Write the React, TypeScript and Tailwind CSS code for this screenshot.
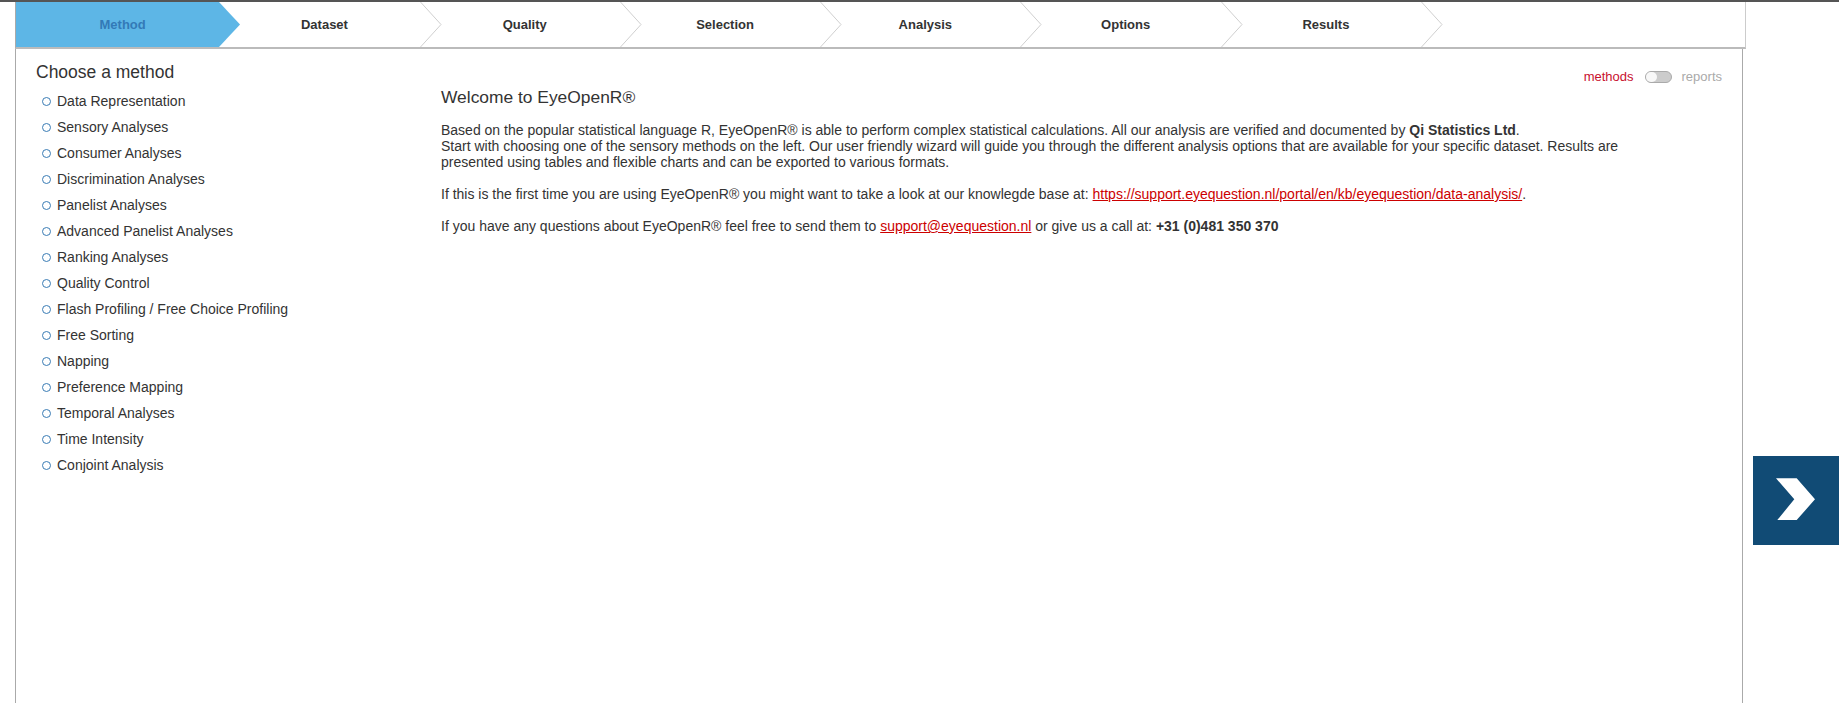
import React from 'react'

const steps = ['Method', 'Dataset', 'Quality', 'Selection', 'Analysis', 'Options', 'Results']

const methods = [
    'Data Representation',
    'Sensory Analyses',
    'Consumer Analyses',
    'Discrimination Analyses',
    'Panelist Analyses',
    'Advanced Panelist Analyses',
    'Ranking Analyses',
    'Quality Control',
    'Flash Profiling / Free Choice Profiling',
    'Free Sorting',
    'Napping',
    'Preference Mapping',
    'Temporal Analyses',
    'Time Intensity',
    'Conjoint Analysis',
]

function Step({ label, index }: { label: string; index: number }) {
    const active = index === 0
    return (
        <div
            className={
                'relative h-full shrink-0 flex items-center justify-center pl-[10px] font-bold text-[13px] ' +
                (active ? 'w-[203.3px] bg-[#5db6e6] text-[#337ab7] z-10' : 'w-[200.3px] text-[#333]')
            }
        >
            {label}
            <svg
                className="absolute top-0 left-full h-full w-[22px]"
                viewBox="0 0 22 45"
                preserveAspectRatio="none"
            >
                {active ? (
                    <polygon points="0,0 21,22.5 0,45" fill="#5db6e6" />
                ) : (
                    <polyline points="0.5,0 21,22.5 0.5,45" fill="none" stroke="#cfcfcf" strokeWidth="1" />
                )}
            </svg>
        </div>
    )
}

export default function App() {
    return (
        <div className="h-[703px] overflow-hidden bg-white text-[14px] text-[#333] font-['Liberation_Sans',Arial,sans-serif]">
            <div className="h-[2px] bg-[#555]" />
            <div className="flex h-[701px]">
                <div className="w-[15px] shrink-0" />

                <div className="w-[1731px] shrink-0 flex flex-col">
                    {/* wizard steps */}
                    <div className="flex h-[47px] shrink-0 border-l border-l-[#aaa] border-r border-r-[#ccc] border-b-2 border-b-[#bbb]">
                        {steps.map((s, i) => (
                            <Step key={s} label={s} index={i} />
                        ))}
                    </div>

                    <div className="flex flex-1 w-[1728px] border-x border-[#aaa]">
                        {/* sidebar */}
                        <div className="w-[425px] shrink-0 pl-5 pt-[13px]">
                            <h2 className="text-[17.5px] leading-[20px] text-[#333]">Choose a method</h2>
                            <ul className="mt-[6px] pl-[6px]">
                                {methods.map((m) => (
                                    <li key={m} className="flex items-center h-[26px] cursor-pointer">
                                        <span className="w-[9px] h-[9px] rounded-full border-[1.3px] border-[#3a7cb5] mr-[6px] shrink-0" />
                                        <span>{m}</span>
                                    </li>
                                ))}
                            </ul>
                        </div>

                        {/* main */}
                        <div className="flex-1 pr-5 pt-5">
                            <div className="flex items-center justify-end h-4 leading-4 text-[13px]">
                                <span className="text-[#c8102e]">methods</span>
                                <span className="ml-[11px] mr-[10px] w-[27px] h-[12px] rounded-full bg-[#ccc] border border-[#aaa] flex items-center">
                                    <span className="w-[11px] h-[10px] rounded-full bg-[#f8f8f8]" />
                                </span>
                                <span className="text-[#aaa]">reports</span>
                            </div>

                            <h1 className="mt-[2px] text-[17.4px] leading-[20px] text-[#333]">Welcome to EyeOpenR®</h1>

                            <div className="mt-[15px] w-[1210px] leading-4">
                                <p>
                                    Based on the popular statistical language R, EyeOpenR® is able to perform complex statistical calculations. All our analysis are verified and documented by <b>Qi Statistics Ltd</b>.
                                    <br />
                                    Start with choosing one of the sensory methods on the left. Our user friendly wizard will guide you through the different analysis options that are available for your specific dataset. Results are presented using tables and flexible charts and can be exported to various formats.
                                </p>
                                <p className="mt-4">
                                    If this is the first time you are using EyeOpenR® you might want to take a look at our knowlegde base at:{' '}
                                    <a className="text-[#c00] underline" href="#">https://support.eyequestion.nl/portal/en/kb/eyequestion/data-analysis/</a>.
                                </p>
                                <p className="mt-4">
                                    If you have any questions about EyeOpenR® feel free to send them to{' '}
                                    <a className="text-[#c00] underline" href="#">support@eyequestion.nl</a> or give us a call at:{' '}
                                    <b>+31 (0)481 350 370</b>
                                </p>
                            </div>
                        </div>
                    </div>
                </div>

                {/* next button */}
                <div className="flex-1 pl-[7px] pt-[454px]">
                    <button className="w-[90px] h-[89px] bg-[#114b75] block">
                        <svg viewBox="0 0 86 89" className="w-[86px] h-[89px]">
                            <polygon points="23,22.3 43.7,22.3 62,43.3 43.7,64 24.3,64 41.3,43.3" fill="#fff" />
                        </svg>
                    </button>
                </div>
            </div>
        </div>
    )
}
